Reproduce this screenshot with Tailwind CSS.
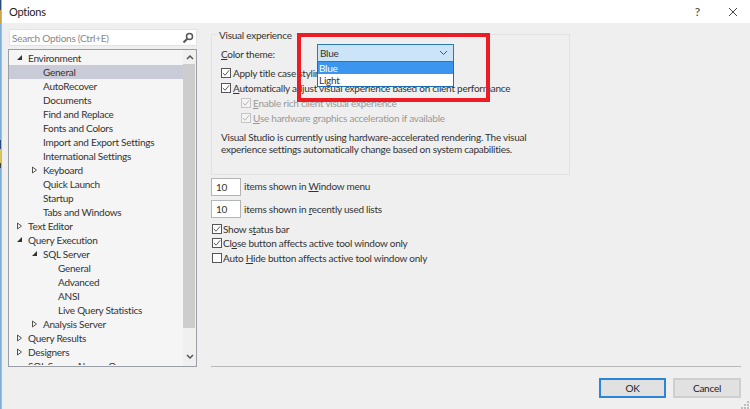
<!DOCTYPE html>
<html lang="en">

<head>
    <meta charset="UTF-8">
    <title>Options</title>
    <script src="https://cdn.jsdelivr.net/npm/@tailwindcss/browser@4"></script>
</head>

<body class="w-[750px] h-[409px] overflow-hidden bg-[#efefef] font-['Lato',sans-serif] text-[10px] tracking-[-0.25px] leading-[14px] text-[#333]">

    <div class="flex h-full">
        <!-- desktop showing behind the window -->
        <div class="w-[1px] shrink-0 flex flex-col bg-[#7fb0d8]">
            <div class="h-[10px] bg-[#2c4a78]"></div>
            <div class="h-[14px] bg-[#c9a24a]"></div>
            <div class="h-[116px] bg-[#7fb0d8]"></div>
            <div class="h-[9px] bg-[#2a4a80]"></div>
            <div class="h-[14px] bg-[#d8c860]"></div>
            <div class="h-[5px] bg-[#4a4438]"></div>
        </div>
        <!-- window edge -->
        <div class="w-[1px] shrink-0 bg-[#8fc0ea]"></div>

        <div class="relative flex-1 flex flex-col">
            <!-- title bar -->
            <div class="h-[23px] bg-white flex items-center pl-[7px] text-[11px] text-[#222]">
                <span>Options</span>
                <span class="ml-auto mr-[28px] text-[12px] font-semibold text-[#555]">?</span>
                <svg class="mr-[12px]" width="10" height="10" viewBox="0 0 10 10">
                    <path d="M1 1L9 9M9 1L1 9" stroke="#444" stroke-width="1" fill="none" />
                </svg>
            </div>

            <div class="flex-1 flex pl-[6px]">
                <!-- left column -->
                <div class="w-[189px] shrink-0 pt-[6px]">
                    <div class="h-[17px] ml-[1px] bg-white border border-[#e3e3e3] flex items-center pl-[2px] pr-[2px] text-[#888]">
                        <span>Search Options (Ctrl+E)</span>
                        <svg class="ml-auto" width="12" height="12" viewBox="0 0 12 12">
                            <circle cx="7.5" cy="4.5" r="3" stroke="#555" stroke-width="1.5" fill="none" />
                            <path d="M5.3 6.7L1.5 10.5" stroke="#555" stroke-width="2" fill="none" />
                        </svg>
                    </div>

                    <div class="mt-[3px] h-[318px] border border-[#9a9fa6] bg-[#f5f5f5] flex overflow-hidden">
                        <div class="flex-1 min-w-0 overflow-hidden">
                            <div class="h-[14px] mt-[1px] pl-[19px] relative"><svg class="absolute left-[7px] top-[3px]" width="7" height="7" viewBox="0 0 7 7"><path d="M6 1V6H1Z" fill="#333" /></svg>Environment</div>
                            <div class="h-[14px] pl-[34px] bg-[#c9cbd9]">General</div>
                            <div class="h-[14px] pl-[34px]">AutoRecover</div>
                            <div class="h-[14px] pl-[34px]">Documents</div>
                            <div class="h-[14px] pl-[34px]">Find and Replace</div>
                            <div class="h-[14px] pl-[34px]">Fonts and Colors</div>
                            <div class="h-[14px] pl-[34px]">Import and Export Settings</div>
                            <div class="h-[14px] pl-[34px]">International Settings</div>
                            <div class="h-[14px] pl-[34px] relative"><svg class="absolute left-[22px] top-[3px]" width="7" height="8" viewBox="0 0 7 8"><path d="M1.5 1L5.5 4L1.5 7Z" fill="none" stroke="#555" /></svg>Keyboard</div>
                            <div class="h-[14px] pl-[34px]">Quick Launch</div>
                            <div class="h-[14px] pl-[34px]">Startup</div>
                            <div class="h-[14px] pl-[34px]">Tabs and Windows</div>
                            <div class="h-[14px] pl-[19px] relative"><svg class="absolute left-[7px] top-[3px]" width="7" height="8" viewBox="0 0 7 8"><path d="M1.5 1L5.5 4L1.5 7Z" fill="none" stroke="#555" /></svg>Text Editor</div>
                            <div class="h-[14px] pl-[19px] relative"><svg class="absolute left-[7px] top-[3px]" width="7" height="7" viewBox="0 0 7 7"><path d="M6 1V6H1Z" fill="#333" /></svg>Query Execution</div>
                            <div class="h-[14px] pl-[34px] relative"><svg class="absolute left-[22px] top-[3px]" width="7" height="7" viewBox="0 0 7 7"><path d="M6 1V6H1Z" fill="#333" /></svg>SQL Server</div>
                            <div class="h-[14px] pl-[49px]">General</div>
                            <div class="h-[14px] pl-[49px]">Advanced</div>
                            <div class="h-[14px] pl-[49px]">ANSI</div>
                            <div class="h-[14px] pl-[49px]">Live Query Statistics</div>
                            <div class="h-[14px] pl-[34px] relative"><svg class="absolute left-[22px] top-[3px]" width="7" height="8" viewBox="0 0 7 8"><path d="M1.5 1L5.5 4L1.5 7Z" fill="none" stroke="#555" /></svg>Analysis Server</div>
                            <div class="h-[14px] pl-[19px] relative"><svg class="absolute left-[7px] top-[3px]" width="7" height="8" viewBox="0 0 7 8"><path d="M1.5 1L5.5 4L1.5 7Z" fill="none" stroke="#555" /></svg>Query Results</div>
                            <div class="h-[14px] pl-[19px] relative"><svg class="absolute left-[7px] top-[3px]" width="7" height="8" viewBox="0 0 7 8"><path d="M1.5 1L5.5 4L1.5 7Z" fill="none" stroke="#555" /></svg>Designers</div>
                            <div class="h-[6px] overflow-hidden pl-[19px]">SQL Server Always On</div>
                        </div>

                        <!-- scrollbar -->
                        <div class="w-[13px] shrink-0 flex flex-col bg-[#f0f0f0]">
                            <div class="h-[14px] flex items-center justify-center">
                                <svg width="8" height="6" viewBox="0 0 8 6"><path d="M1 5L4 2L7 5" stroke="#555" stroke-width="1.5" fill="none" /></svg>
                            </div>
                            <div class="h-[264px] w-[12px] bg-[#cdcdcd]"></div>
                            <div class="mt-auto h-[19px] flex items-center justify-center">
                                <svg width="8" height="6" viewBox="0 0 8 6"><path d="M1 1L4 4L7 1" stroke="#555" stroke-width="1.5" fill="none" /></svg>
                            </div>
                        </div>
                    </div>
                </div>

                <!-- right column -->
                <div class="flex-1 pl-[14px] pr-[12px] flex flex-col">
                    <!-- Visual experience group -->
                    <div class="relative w-[359px] h-[141px] mt-[11px] border border-[#e2e2e2] pl-[9px]">
                        <span class="absolute left-[5px] top-[-7px] px-[2px] bg-[#efefef]">Visual experience</span>
                        <div class="h-[16px] mt-[12px]"><span><u>C</u>olor theme:</span></div>

                        <div class="mt-[2px] flex items-center h-[15px] gap-[2px]">
                            <span class="w-[10px] h-[10px] border border-[#555] bg-white flex items-center justify-center"><svg width="8" height="8" viewBox="0 0 9 9"><path d="M1 4.5L3.5 7L8 1.5" stroke="#444" fill="none" /></svg></span>
                            <span>Apply title case styling to menu bar</span>
                        </div>
                        <div class="flex items-center h-[15px] gap-[2px]">
                            <span class="w-[10px] h-[10px] border border-[#555] bg-white flex items-center justify-center"><svg width="8" height="8" viewBox="0 0 9 9"><path d="M1 4.5L3.5 7L8 1.5" stroke="#444" fill="none" /></svg></span>
                            <span><u>A</u>utomatically adjust visual experience based on client performance</span>
                        </div>
                        <div class="flex items-center h-[15px] ml-[20px] gap-[2px] text-[#999]">
                            <span class="w-[10px] h-[10px] border border-[#c4c4c4] bg-[#f4f4f4] flex items-center justify-center"><svg width="8" height="8" viewBox="0 0 9 9"><path d="M1 4.5L3.5 7L8 1.5" stroke="#aaa" fill="none" /></svg></span>
                            <span><u>E</u>nable rich client visual experience</span>
                        </div>
                        <div class="flex items-center h-[15px] ml-[20px] gap-[2px] text-[#999]">
                            <span class="w-[10px] h-[10px] border border-[#c4c4c4] bg-[#f4f4f4] flex items-center justify-center"><svg width="8" height="8" viewBox="0 0 9 9"><path d="M1 4.5L3.5 7L8 1.5" stroke="#aaa" fill="none" /></svg></span>
                            <span><u>U</u>se hardware graphics acceleration if available</span>
                        </div>
                        <p class="mt-[6px] leading-[12px] w-[320px]">Visual Studio is currently using hardware-accelerated rendering. The visual experience settings automatically change based on system capabilities.</p>

                        <!-- open combo box -->
                        <div class="absolute left-[105px] top-[9px] w-[137px] z-10">
                            <div class="h-[18px] bg-[#cce4f7] border border-[#2a7ab8] flex items-center pl-[2px] pr-[5px]">
                                <span>Blue</span>
                                <svg class="ml-auto" width="9" height="6" viewBox="0 0 9 6"><path d="M1 1L4.5 4.5L8 1" stroke="#555" fill="none" /></svg>
                            </div>
                            <div class="border border-[#1b6fb0] border-t-0 bg-white">
                                <div class="h-[12px] leading-[12px] pl-[1px] bg-[#3c96f0] text-white">Blue</div>
                                <div class="h-[12px] leading-[12px] pl-[1px]">Light</div>
                            </div>
                        </div>
                        <!-- red annotation -->
                        <div class="absolute left-[85px] top-[-2px] w-[193px] h-[69px] border-[4px] border-[#ed1c24] z-20"></div>
                    </div>

                    <div class="mt-[3px] flex items-center h-[18px] gap-[3px]">
                        <span class="w-[30px] h-[18px] bg-white border border-[#b5b5b5] pl-[4px] leading-[16px]">10</span>
                        <span class="pb-[2px]">items shown in <u>W</u>indow menu</span>
                    </div>
                    <div class="mt-[4px] flex items-center h-[18px] gap-[3px]">
                        <span class="w-[30px] h-[18px] bg-white border border-[#b5b5b5] pl-[4px] leading-[16px]">10</span>
                        <span>items shown in <u>r</u>ecently used lists</span>
                    </div>
                    <div class="mt-[4px] ml-[1px] flex items-center h-[14px] gap-[1px]">
                        <span class="w-[10px] h-[10px] border border-[#555] bg-white flex items-center justify-center"><svg width="8" height="8" viewBox="0 0 9 9"><path d="M1 4.5L3.5 7L8 1.5" stroke="#444" fill="none" /></svg></span>
                        <span>Show s<u>t</u>atus bar</span>
                    </div>
                    <div class="ml-[1px] flex items-center h-[14px] gap-[1px]">
                        <span class="w-[10px] h-[10px] border border-[#555] bg-white flex items-center justify-center"><svg width="8" height="8" viewBox="0 0 9 9"><path d="M1 4.5L3.5 7L8 1.5" stroke="#444" fill="none" /></svg></span>
                        <span>Cl<u>o</u>se button affects active tool window only</span>
                    </div>
                    <div class="mt-[1px] ml-[1px] flex items-center h-[14px] gap-[1px]">
                        <span class="w-[10px] h-[10px] border border-[#555] bg-white"></span>
                        <span>Auto <u>H</u>ide button affects active tool window only</span>
                    </div>

                    <!-- footer -->
                    <div class="mt-auto border-t border-[#b9b9b9] h-[43px] flex justify-end items-start gap-[7px] pt-[11px] -mr-[3px] pr-0">
                        <button class="w-[67px] h-[20px] bg-[#e1e1e1] border-2 border-[#2a86d8] text-[#222]">OK</button>
                        <button class="w-[68px] h-[20px] bg-[#e1e1e1] border-2 border-[#cfcfcf] text-[#222]">Cancel</button>
                    </div>
                </div>
            </div>

            <!-- resize grip -->
            <svg class="absolute right-0 bottom-0" width="9" height="9" viewBox="0 0 9 9">
                <path d="M6 1h2v2h-2zM3 4h2v2h-2zM6 4h2v2h-2zM0 7h2v2h-2zM3 7h2v2h-2zM6 7h2v2h-2z" fill="#bdbdbd" />
            </svg>
        </div>
    </div>

</body>

</html>
